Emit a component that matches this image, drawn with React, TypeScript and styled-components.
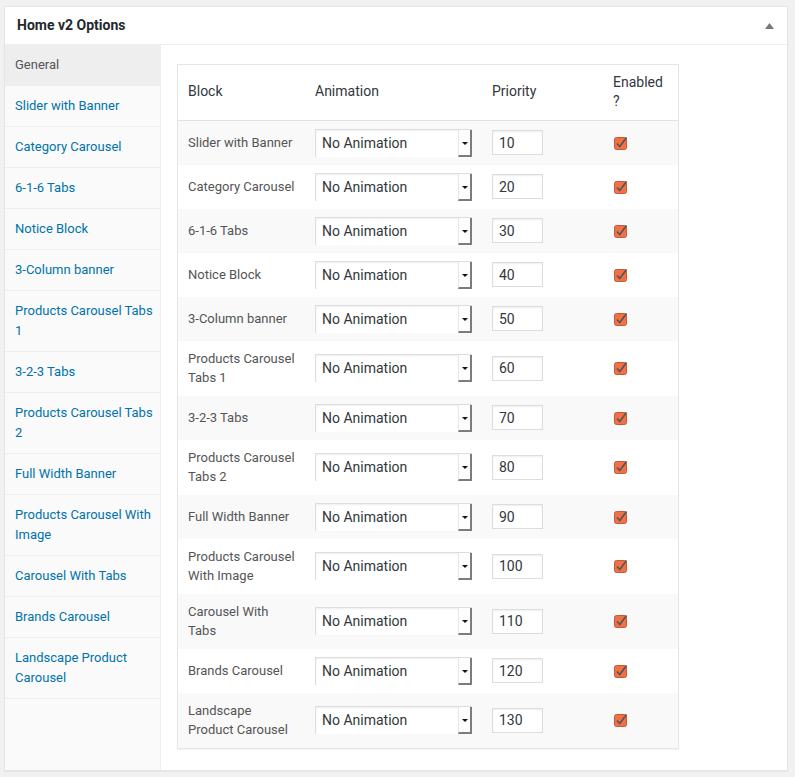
import React from 'react';
import styled, { createGlobalStyle } from 'styled-components';

const GlobalStyle = createGlobalStyle`
  body {
    margin: 0;
    background: #f1f1f1;
    font-family: Roboto, "Liberation Sans", Arial, sans-serif;
  }
`;

const Page = styled.div`
  padding: 6px 7px 6px 4px;
`;

const Postbox = styled.div`
  background: #fff;
  border: 1px solid #e5e5e5;
  box-shadow: 0 1px 1px rgba(0, 0, 0, 0.04);
`;

const Header = styled.div`
  display: flex;
  align-items: center;
  justify-content: space-between;
  padding: 9px 12px 8px;
  border-bottom: 1px solid #eee;
`;

const Title = styled.h2`
  margin: 0;
  font-size: 14px;
  font-weight: 700;
  line-height: 1.4;
  color: #23282d;
`;

const Toggle = styled.span`
  display: flex;
  margin-right: 1px;
`;

const Body = styled.div`
  display: flex;
`;

const Sidebar = styled.ul`
  list-style: none;
  margin: 0;
  padding: 0;
  width: 155px;
  flex-shrink: 0;
  background: #fafafa;
  border-right: 1px solid #eee;
`;

const NavItem = styled.li<{ $active?: boolean }>`
  padding: 10px 3px 10px 10px;
  font-size: 13px;
  line-height: 20px;
  border-bottom: 1px solid #eee;
  color: ${p => (p.$active ? '#555' : '#0073aa')};
  background: ${p => (p.$active ? '#eee' : 'transparent')};
`;

const Content = styled.div`
  padding: 19px 16px 21px;
`;

const Table = styled.table`
  width: 502px;
  table-layout: fixed;
  border-collapse: separate;
  border-spacing: 0;
  border: 1px solid #e5e5e5;
  box-shadow: 0 1px 1px rgba(0, 0, 0, 0.04);
`;

const Th = styled.th`
  text-align: left;
  font-weight: 400;
  font-size: 14px;
  line-height: 1.4em;
  color: #32373c;
  padding: 8px 10px;
  border-bottom: 1px solid #e1e1e1;
  vertical-align: middle;
`;

const Row = styled.tr<{ $striped: boolean }>`
  background: ${p => (p.$striped ? '#f9f9f9' : '#fff')};
`;

const Td = styled.td`
  padding: 8px 10px;
  font-size: 13px;
  line-height: 1.5em;
  color: #555;
  vertical-align: middle;
`;

const Select = styled.div`
  display: flex;
  align-items: stretch;
  width: 157px;
  height: 28px;
  box-sizing: border-box;
  border: 1px solid #ddd;
  border-right: none;
  border-bottom: none;
  background: #fff;
  box-shadow: inset 0 1px 2px rgba(0, 0, 0, 0.07);
`;

const SelectText = styled.span`
  flex: 1;
  padding: 0 6px;
  font-size: 14px;
  line-height: 26px;
  color: #32373c;
  white-space: nowrap;
`;

const SelectButton = styled.span`
  width: 11px;
  display: flex;
  align-items: center;
  justify-content: center;
  border-left: 1px solid #e6e6e6;
  border-right: 2px solid #7c7c7c;
  border-bottom: 2px solid #7c7c7c;
  background: #fdfdfd;

  &::after {
    content: '';
    border-left: 3px solid transparent;
    border-right: 3px solid transparent;
    border-top: 3px solid #111;
    margin-top: 2px;
  }
`;

const NumberInput = styled.input`
  width: 51px;
  height: 25px;
  box-sizing: border-box;
  border: 1px solid #ddd;
  box-shadow: inset 0 1px 2px rgba(0, 0, 0, 0.07);
  padding: 0 6px;
  font-family: inherit;
  font-size: 14px;
  color: #32373c;
  outline: none;
  display: block;
`;

const CheckWrap = styled.span`
  display: flex;
  padding-left: 1px;
`;

const sections = [
  'Slider with Banner',
  'Category Carousel',
  '6-1-6 Tabs',
  'Notice Block',
  '3-Column banner',
  'Products Carousel Tabs 1',
  '3-2-3 Tabs',
  'Products Carousel Tabs 2',
  'Full Width Banner',
  'Products Carousel With Image',
  'Carousel With Tabs',
  'Brands Carousel',
  'Landscape Product Carousel',
];

const Checkbox = () => (
  <svg width="14" height="14" viewBox="0 0 14 14">
    <rect x="0.5" y="1.5" width="12" height="12" rx="2" fill="#ef7148" stroke="#c65a36" />
    <path d="M3 7.5 L5.8 10.5 L12.5 1.5" fill="none" stroke="#5a5552" strokeWidth="1.7" />
  </svg>
);

export default function App() {
  return (
    <Page>
      <GlobalStyle />
      <Postbox>
        <Header>
          <Title>Home v2 Options</Title>
          <Toggle>
            <svg width="9" height="6" viewBox="0 0 9 6">
              <path d="M0 6 L4.5 0 L9 6 Z" fill="#72777c" />
            </svg>
          </Toggle>
        </Header>
        <Body>
          <Sidebar>
            <NavItem $active>General</NavItem>
            {sections.map(s => (
              <NavItem key={s}>{s}</NavItem>
            ))}
          </Sidebar>
          <Content>
            <Table>
              <colgroup>
                <col style={{ width: 127 }} />
                <col style={{ width: 177 }} />
                <col style={{ width: 121 }} />
                <col style={{ width: 75 }} />
              </colgroup>
              <thead>
                <tr>
                  <Th>Block</Th>
                  <Th>Animation</Th>
                  <Th>Priority</Th>
                  <Th>Enabled ?</Th>
                </tr>
              </thead>
              <tbody>
                {sections.map((s, i) => (
                  <Row key={s} $striped={i % 2 === 0}>
                    <Td>{s}</Td>
                    <Td>
                      <Select>
                        <SelectText>No Animation</SelectText>
                        <SelectButton />
                      </Select>
                    </Td>
                    <Td>
                      <NumberInput defaultValue={(i + 1) * 10} />
                    </Td>
                    <Td>
                      <CheckWrap>
                        <Checkbox />
                      </CheckWrap>
                    </Td>
                  </Row>
                ))}
              </tbody>
            </Table>
          </Content>
        </Body>
      </Postbox>
    </Page>
  );
}
